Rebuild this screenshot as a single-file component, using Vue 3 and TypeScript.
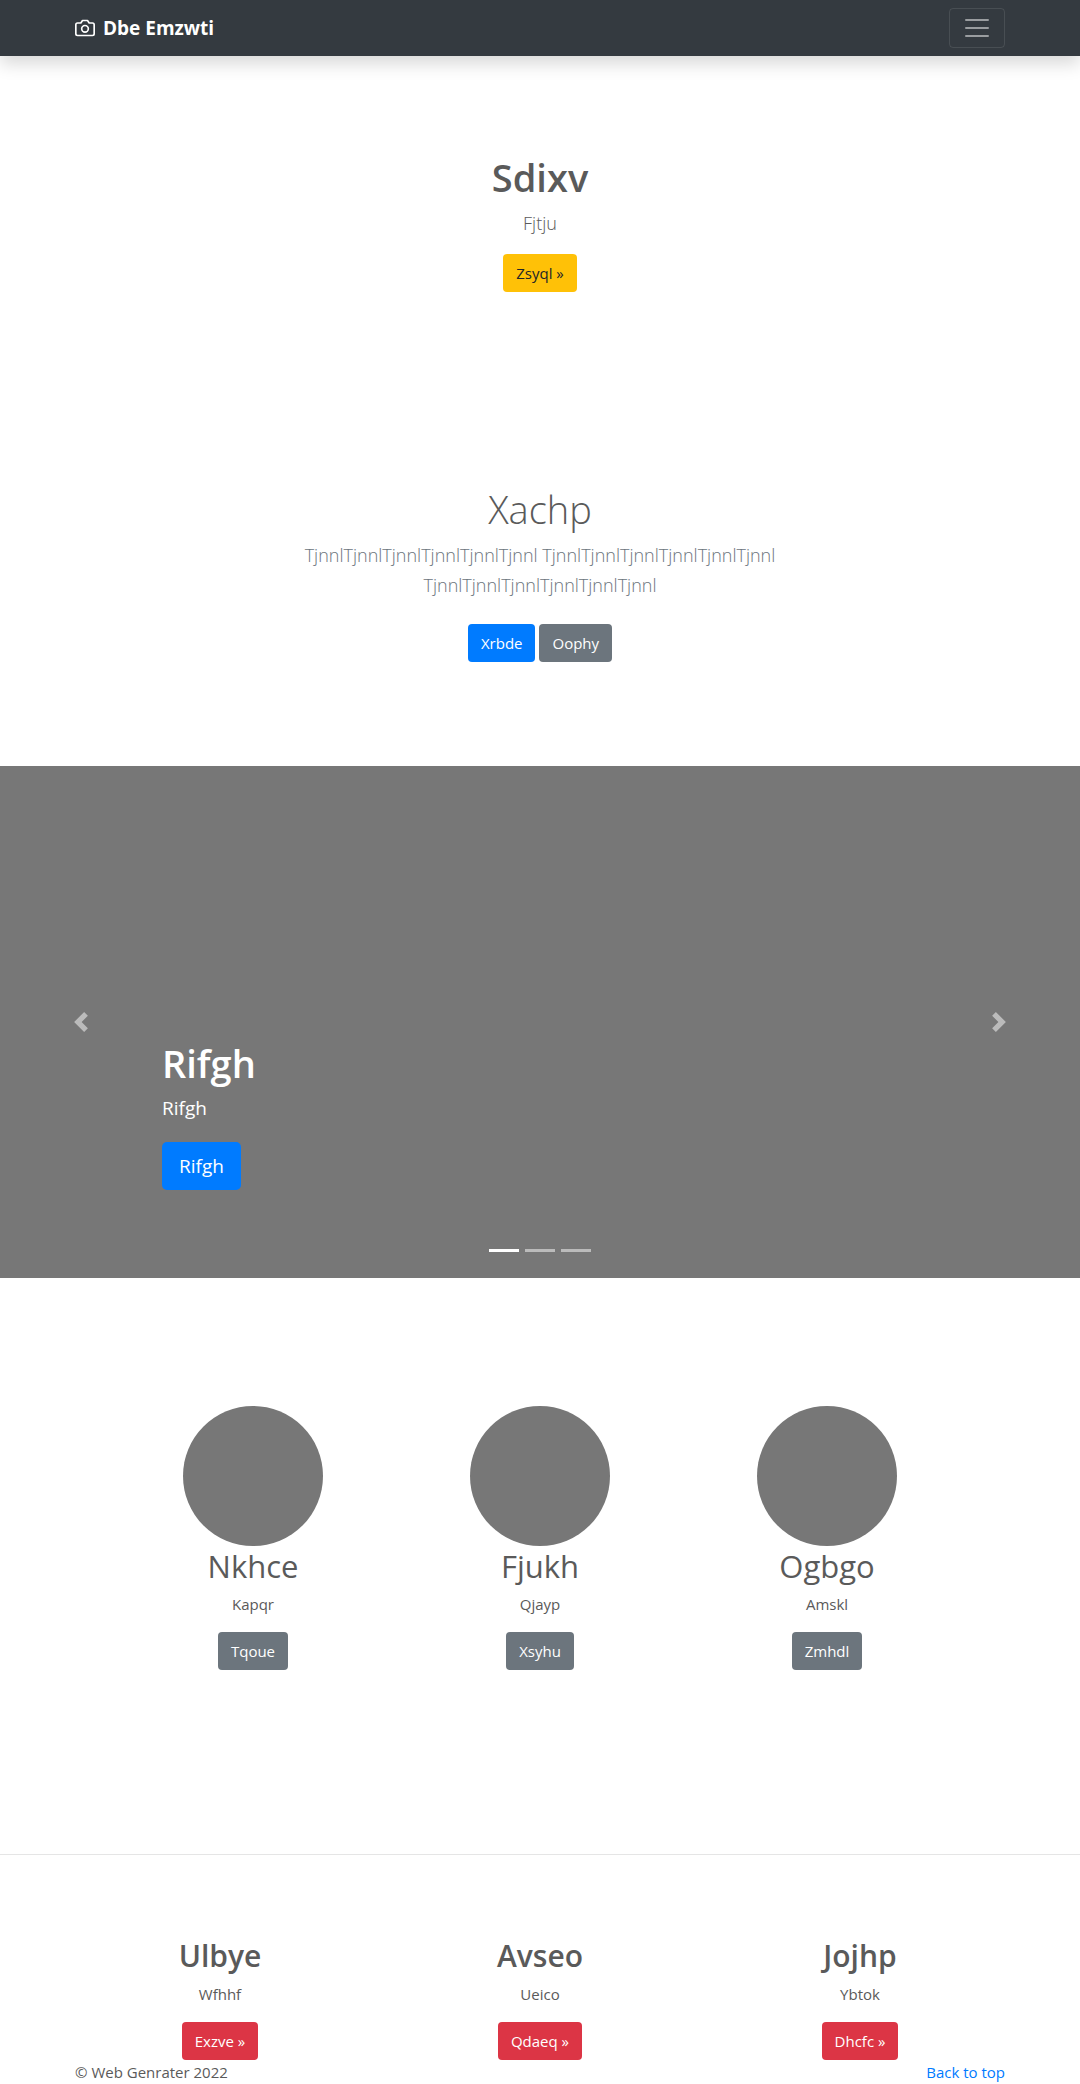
<script setup lang="ts">
interface Feature {
  title: string
  text: string
  action: string
}

const features: Feature[] = [
  { title: 'Nkhce', text: 'Kapqr', action: 'Tqoue' },
  { title: 'Fjukh', text: 'Qjayp', action: 'Xsyhu' },
  { title: 'Ogbgo', text: 'Amskl', action: 'Zmhdl' },
]

const offers: Feature[] = [
  { title: 'Ulbye', text: 'Wfhhf', action: 'Exzve »' },
  { title: 'Avseo', text: 'Ueico', action: 'Qdaeq »' },
  { title: 'Jojhp', text: 'Ybtok', action: 'Dhcfc »' },
]

const slides = [1, 2, 3]
const activeSlide = 1
const phrase = 'Tjnnl'.repeat(6)
</script>

<template>
  <div id="top" class="page">
    <header class="navbar">
      <div class="container navbar-inner">
        <a href="#top" class="brand">
          <svg class="brand-icon" viewBox="0 0 24 24" fill="none" stroke="currentColor" stroke-width="2" stroke-linecap="round" stroke-linejoin="round" aria-hidden="true">
            <path d="M23 19a2 2 0 0 1-2 2H3a2 2 0 0 1-2-2V8a2 2 0 0 1 2-2h4l2-3h6l2 3h4a2 2 0 0 1 2 2z" />
            <circle cx="12" cy="13" r="4" />
          </svg>
          <span>Dbe Emzwti</span>
        </a>
        <button type="button" class="toggler" aria-label="Toggle navigation">
          <svg viewBox="0 0 30 30" aria-hidden="true">
            <path stroke="rgba(255,255,255,0.5)" stroke-width="2" stroke-linecap="round" stroke-miterlimit="10" d="M4 7h22M4 15h22M4 23h22" />
          </svg>
        </button>
      </div>
    </header>

    <main>
      <section class="intro">
        <h1>Sdixv</h1>
        <p class="lead">Fjtju</p>
        <a href="#" class="btn btn-warning">Zsyql »</a>
      </section>

      <section class="album">
        <h1 class="light">Xachp</h1>
        <p class="lead muted">{{ phrase }} {{ phrase }} {{ phrase }}</p>
        <div class="actions">
          <a href="#" class="btn btn-primary">Xrbde</a>
          <a href="#" class="btn btn-secondary">Oophy</a>
        </div>
      </section>

      <section class="carousel" aria-label="Carousel">
        <button type="button" class="control" aria-label="Previous">
          <svg viewBox="0 0 8 8" aria-hidden="true"><path d="M5.25 0l-4 4 4 4 1.5-1.5L4.25 4l2.5-2.5L5.25 0z" /></svg>
        </button>
        <div class="caption">
          <h1>Rifgh</h1>
          <p>Rifgh</p>
          <a href="#" class="btn btn-primary btn-lg">Rifgh</a>
        </div>
        <button type="button" class="control" aria-label="Next">
          <svg viewBox="0 0 8 8" aria-hidden="true"><path d="M2.75 0l-1.5 1.5L3.75 4l-2.5 2.5L2.75 8l4-4-4-4z" /></svg>
        </button>
        <div class="indicators">
          <button
            v-for="slide in slides"
            :key="slide"
            type="button"
            :class="{ active: slide === activeSlide }"
            :aria-label="`Slide ${slide}`"
          />
        </div>
      </section>

      <section class="features">
        <article v-for="item in features" :key="item.title" class="card">
          <div class="avatar" />
          <h2 class="regular">{{ item.title }}</h2>
          <p>{{ item.text }}</p>
          <a href="#" class="btn btn-secondary">{{ item.action }}</a>
        </article>
      </section>

      <hr />

      <section class="offers">
        <article v-for="item in offers" :key="item.title" class="card">
          <h2>{{ item.title }}</h2>
          <p>{{ item.text }}</p>
          <a href="#" class="btn btn-danger">{{ item.action }}</a>
        </article>
      </section>
    </main>

    <footer class="container footer">
      <span>© Web Genrater 2022</span>
      <a href="#top">Back to top</a>
    </footer>
  </div>
</template>

<style>
body {
  margin: 0;
  background: #fff;
}
</style>

<style scoped>
.page {
  color: #5a5a5a;
  font-family: "Open Sans", "Noto Sans", sans-serif;
  font-size: 15px;
  line-height: 24px;
}

.page *,
.page *::before {
  box-sizing: border-box;
}

.container {
  width: 100%;
  max-width: 960px;
  margin: 0 auto;
  padding: 0 15px;
}

.navbar {
  position: relative;
  background: #343a40;
  box-shadow: 0 8px 16px rgba(0, 0, 0, 0.15);
}

.navbar-inner {
  display: flex;
  align-items: center;
  justify-content: space-between;
  height: 56px;
}

.brand {
  display: flex;
  align-items: center;
  gap: 8px;
  color: #fff;
  font-size: 19px;
  font-weight: 700;
  text-decoration: none;
}

.brand-icon {
  width: 20px;
  height: 20px;
}

.toggler {
  display: flex;
  align-items: center;
  justify-content: center;
  width: 56px;
  height: 40px;
  padding: 0;
  background: transparent;
  border: 1px solid rgba(255, 255, 255, 0.1);
  border-radius: 4px;
}

.toggler svg {
  width: 30px;
  height: 30px;
}

h1,
h2,
p {
  margin: 0;
}

h1 {
  margin-bottom: 6px;
  font-size: 38px;
  font-weight: 600;
  line-height: 50px;
}

h1.light {
  font-weight: 300;
}

h2 {
  margin-bottom: 6px;
  font-size: 30px;
  font-weight: 600;
  line-height: 40px;
}

h2.regular {
  font-size: 31px;
  font-weight: 400;
}

.lead {
  margin-bottom: 16px;
  font-size: 18px;
  font-weight: 300;
  line-height: 30px;
}

.muted {
  color: #6c757d;
}

.btn {
  display: block;
  padding: 6px 12px;
  border: 1px solid transparent;
  border-radius: 4px;
  color: #fff;
  text-decoration: none;
}

.btn-warning {
  background: #ffc107;
  color: #212529;
}

.btn-primary {
  background: #007bff;
}

.btn-secondary {
  background: #6c757d;
}

.btn-danger {
  background: #dc3545;
}

.btn-lg {
  padding: 8px 16px;
  border-radius: 5px;
  font-size: 19px;
  line-height: 30px;
}

.intro {
  display: flex;
  flex-direction: column;
  align-items: center;
  padding: 96px 16px;
}

.album {
  max-width: 528px;
  margin: 0 auto;
  padding: 96px 16px 104px;
  text-align: center;
}

.actions {
  display: flex;
  justify-content: center;
  gap: 4px;
  padding-top: 8px;
}

.carousel {
  position: relative;
  display: flex;
  min-height: 512px;
  background: #777;
  color: #fff;
}

.control {
  flex: 0 0 15%;
  padding: 0;
  background: transparent;
  border: 0;
  opacity: 0.5;
}

.control svg {
  display: block;
  width: 20px;
  height: 20px;
  margin: 0 auto;
  fill: #fff;
}

.caption {
  flex: 1;
  display: flex;
  flex-direction: column;
  align-items: flex-start;
  align-self: flex-end;
  padding-bottom: 88px;
}

.caption p {
  margin-bottom: 20px;
  font-size: 19px;
  line-height: 28px;
}

.indicators {
  position: absolute;
  right: 0;
  bottom: 26px;
  left: 0;
  display: flex;
  justify-content: center;
  gap: 6px;
}

.indicators button {
  width: 30px;
  height: 3px;
  padding: 0;
  background: #fff;
  border: 0;
  opacity: 0.5;
}

.indicators button.active {
  opacity: 1;
}

.features,
.offers {
  display: grid;
  grid-template-columns: repeat(3, 1fr);
  margin: 0 auto;
}

.features {
  max-width: 861px;
  padding: 128px 0 184px;
}

.offers {
  max-width: 960px;
  padding-top: 81px;
}

.card {
  display: flex;
  flex-direction: column;
  align-items: center;
}

.avatar {
  width: 140px;
  height: 140px;
  background: #777;
  border-radius: 50%;
}

.card p {
  margin-bottom: 16px;
}

hr {
  margin: 0;
  border: 0;
  border-top: 1px solid rgba(0, 0, 0, 0.1);
}

.footer {
  display: flex;
  justify-content: space-between;
}

.footer a {
  color: #007bff;
  text-decoration: none;
}
</style>
